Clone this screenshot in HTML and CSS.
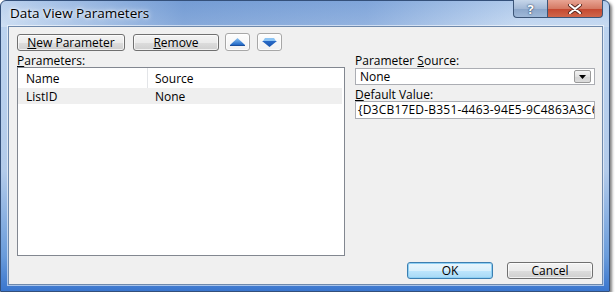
FILE: index.html
```html
<!DOCTYPE html>
<html lang="en">
<head>
  <meta charset="UTF-8">
  <meta name="viewport" content="width=device-width, initial-scale=1.0">
  <title>Data View Parameters</title>
  <link rel="stylesheet" href="styles.css">
</head>
<body>
  <div class="window">
    <div class="titlebar">
      <span class="title">Data View Parameters</span>
      <div class="caption">
        <span class="cap-btn help">?</span>
        <span class="cap-btn close">
          <svg width="16" height="10" viewBox="0 0 16 10">
            <path d="M3 1 L13 9 M13 1 L3 9" stroke="#5a2a22" stroke-width="4" stroke-linecap="round"/>
            <path d="M3 1 L13 9 M13 1 L3 9" stroke="#fff" stroke-width="2.2" stroke-linecap="round"/>
          </svg>
        </span>
      </div>
    </div>

    <div class="client">
      <div class="toolbar">
        <button class="btn btn-new"><u>N</u>ew Parameter</button>
        <button class="btn btn-remove"><u>R</u>emove</button>
        <button class="btn btn-icon btn-up">
          <svg width="15" height="8" viewBox="0 0 15 8">
            <defs>
              <linearGradient id="upFill" x1="0" y1="0" x2="0" y2="1">
                <stop offset="0" stop-color="#8cc4f4"/>
                <stop offset="1" stop-color="#1f66c4"/>
              </linearGradient>
            </defs>
            <polygon points="7.5,0 15,7 0,7" fill="url(#upFill)"/>
            <line x1="0" y1="7.5" x2="15" y2="7.5" stroke="#1a4f9c" stroke-width="1"/>
          </svg>
        </button>
        <button class="btn btn-icon">
          <svg width="15" height="9" viewBox="0 0 15 9">
            <defs>
              <linearGradient id="downFill" x1="0" y1="0" x2="0" y2="1">
                <stop offset="0" stop-color="#2a6cc8"/>
                <stop offset="1" stop-color="#1a55ad"/>
              </linearGradient>
            </defs>
            <polygon points="0,3 15,3 7.5,9" fill="url(#downFill)"/>
            <polygon points="1,3 3,0 12,0 14,3" fill="#8cc4f4"/>
          </svg>
        </button>
      </div>

      <div class="panes">
        <div class="pane-left">
          <div class="label"><u>P</u>arameters:</div>
          <div class="list">
            <div class="list-head">
              <span class="col-name">Name</span>
              <span class="col-source">Source</span>
            </div>
            <div class="list-row">
              <span class="col-name">ListID</span>
              <span class="col-source">None</span>
            </div>
          </div>
        </div>

        <div class="pane-right">
          <div class="label">Parameter <u>S</u>ource:</div>
          <div class="combo">
            <span class="combo-text">None</span>
            <span class="combo-arrow">
              <svg width="7" height="4" viewBox="0 0 7 4"><polygon points="0,0 7,0 3.5,4" fill="#000"/></svg>
            </span>
          </div>
          <div class="label label-gap"><u>D</u>efault Value:</div>
          <div class="field"><span class="field-text">{D3CB17ED-B351-4463-94E5-9C4863A3C6F2}</span></div>
        </div>
      </div>

      <div class="footer">
        <button class="btn btn-ok">OK</button>
        <button class="btn">Cancel</button>
      </div>
    </div>
  </div>
</body>
</html>
```

FILE: styles.css
```css
body {
  margin: 0;
  background: #fff;
  font-family: "Open Sans", "Noto Sans", sans-serif;
  font-size: 12px;
  color: #000;
}
.window {
  width: 610px;
  height: 292px;
  box-sizing: border-box;
  display: flex;
  flex-direction: column;
  padding: 0 6px 6px 7px;
  border: 1px solid #34507a;
  border-radius: 6px 6px 0 0;
  background:
    linear-gradient(to right, rgba(255,255,255,0.3), rgba(40,95,180,0.35) 30%, rgba(60,110,190,0.3) 60%, rgba(255,255,255,0.2) 85%) top / 100% 26px no-repeat,
    linear-gradient(to bottom, #9dbde6 0, #bcd3ef 28px, #b3cbea 170px, #6a9cdb 255px, #3a76ce 100%);
  box-shadow: 2px 2px 3px rgba(0,0,0,0.5);
}
.titlebar {
  height: 25px;
  display: flex;
  align-items: flex-start;
}
.title {
  padding: 4px 0 0 2px;
  font-size: 13.5px;
  line-height: 16px;
  text-shadow: 0 0 6px #fff, 0 0 3px #fff;
}
.caption {
  margin-left: auto;
  display: flex;
  margin-top: -1px;
}
.cap-btn {
  height: 18px;
  display: flex;
  align-items: center;
  justify-content: center;
  border: 1px solid #3c5577;
  border-top: none;
  box-sizing: border-box;
}
.help {
  width: 34px;
  border-radius: 0 0 0 4px;
  border-right: none;
  background: linear-gradient(to bottom, #c6d6ea, #a3b9d6 50%, #8aa5c9 51%, #9fb8d8);
  color: #fff;
  font-weight: bold;
  font-size: 13px;
  text-shadow: 0 0 2px #2b4365, 0 0 1px #2b4365;
}
.close {
  width: 56px;
  border-radius: 0 0 4px 0;
  background: linear-gradient(to bottom, #e8a493, #d57a64 50%, #c4472f 51%, #d0664b);
}
.client {
  flex: 1;
  display: flex;
  flex-direction: column;
  padding: 7px 7px 5px 8px;
  background: #f0f0f0;
  border: 1px solid #6f89ab;
  box-shadow: 0 0 0 1px rgba(255,255,255,0.55);
}
.toolbar {
  display: flex;
  height: 17px;
}
.btn {
  height: 17px;
  padding: 0;
  border: 1px solid #707070;
  border-radius: 3px;
  background: linear-gradient(to bottom, #f3f3f3 0%, #ebebeb 50%, #dddddd 51%, #cfcfcf 100%);
  box-shadow: inset 0 0 0 1px rgba(255,255,255,0.7);
  font-family: inherit;
  font-size: 12px;
  line-height: 14px;
  color: #000;
}
.btn-new {
  width: 108px;
}
.btn-remove {
  width: 86px;
  margin-left: 8px;
}
.btn-icon {
  width: 25px;
  height: 18px;
  margin-top: -1px;
  display: flex;
  align-items: center;
  justify-content: center;
  border-color: #a7a7a7;
  background: linear-gradient(to bottom, #fdfdfd, #f1f1f1);
}
.btn-up {
  margin-left: 6px;
}
.btn-icon + .btn-icon {
  margin-left: 7px;
}
.panes {
  margin-top: 3px;
  display: grid;
  grid-template-columns: 328px 240px;
  column-gap: 10px;
}
.label {
  height: 13px;
  line-height: 13px;
}
.label-gap {
  margin-top: 3px;
}
.list {
  height: 189px;
  box-sizing: border-box;
  border: 1px solid #828790;
  background: #fff;
}
.list-head,
.list-row {
  display: flex;
}
.list-head {
  height: 20px;
  line-height: 22px;
}
.list-row {
  height: 16px;
  line-height: 17px;
  margin-right: 2px;
  background: #efefef;
}
.col-name {
  width: 122px;
  padding-left: 8px;
}
.list-head .col-name {
  border-right: 1px solid #e3e5e8;
  width: 121px;
}
.col-source {
  padding-left: 7px;
}
.combo {
  margin-top: 1px;
  height: 17px;
  box-sizing: border-box;
  display: flex;
  align-items: center;
  border: 1px solid #abadb3;
  background: #fff;
  padding: 0 3px 0 4px;
}
.combo-text {
  flex: 1;
}
.combo-arrow {
  width: 17px;
  height: 13px;
  box-sizing: border-box;
  display: flex;
  align-items: center;
  justify-content: center;
  border: 1px solid #9a9a9a;
  border-radius: 2px;
  background: linear-gradient(to bottom, #f4f4f4, #e2e2e2 50%, #d4d4d4 51%, #dcdcdc);
}
.field {
  height: 18px;
  box-sizing: border-box;
  border: 1px solid #abadb3;
  background: #fff;
  padding: 0 0 0 2px;
  line-height: 16px;
  white-space: nowrap;
  overflow: hidden;
}
.field-text {
  letter-spacing: 0.2px;
}
.footer {
  margin-top: 6px;
  display: flex;
  justify-content: flex-end;
  padding-right: 2px;
}
.footer .btn {
  width: 86px;
  margin-left: 14px;
}
.btn-ok {
  border-color: #3c7fb1;
  background: linear-gradient(to bottom, #eaf6fd 0%, #d9f0fc 50%, #bee6fd 51%, #a7d9f5 100%);
  box-shadow: inset 0 0 0 1px #8fd0f4;
}
```
